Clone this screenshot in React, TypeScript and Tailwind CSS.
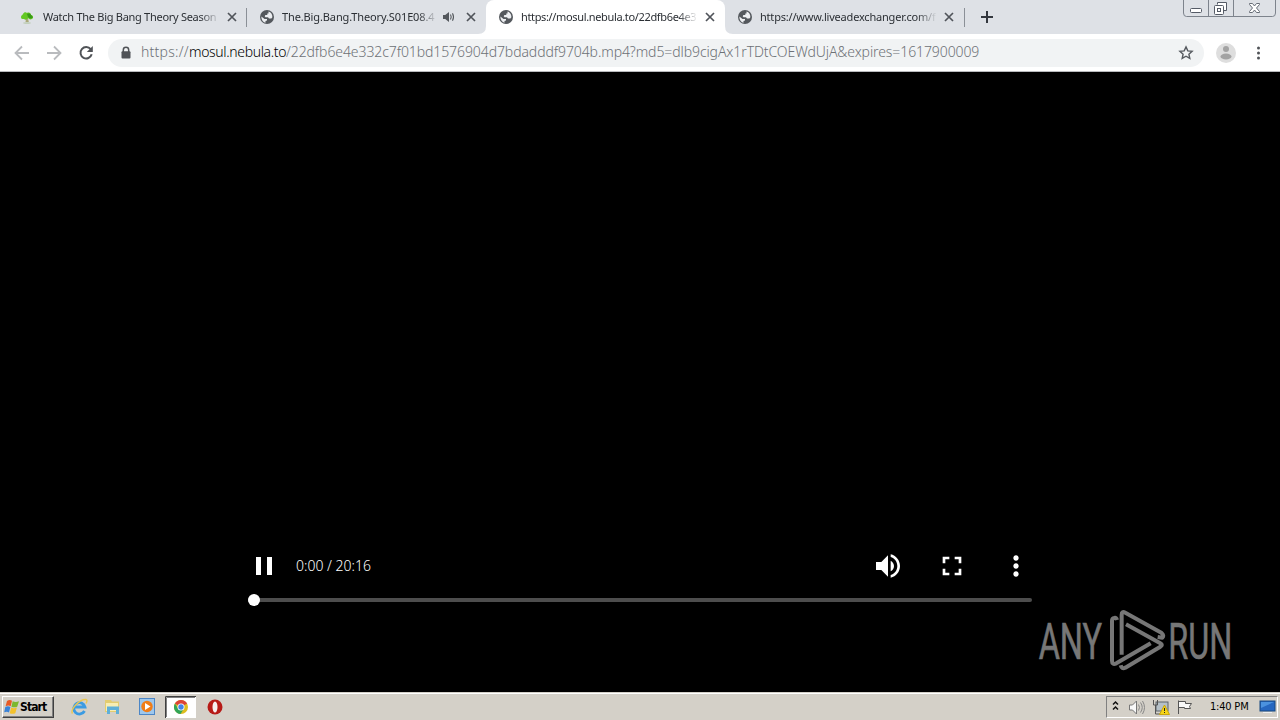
import React from "react";

const Globe = () => (
  <svg className="size-4 shrink-0" viewBox="0 0 16 16">
    <circle cx="8" cy="8" r="7" fill="#54585d" />
    <path d="M2.400 7.500 5.500 10H8v1.400L6.500 12v1.800C4.200 13.200 2.200 10.800 2.400 7.500ZM9.500 2.600c2.500.7 4 2.900 3.900 5.600l-1 1.300H10L9 8.300H6.500L5.700 7.200l.7-1.300h1.900V4.500h1.200Z" fill="#eceef1" />
  </svg>
);

const Close = () => (
  <svg className="size-4 shrink-0" viewBox="0 0 16 16" stroke="#50545a" strokeWidth="1.7">
    <path d="m4 4 8 8M12 4l-8 8" />
  </svg>
);

const Tree = () => (
  <svg className="-ml-px mr-px size-4 shrink-0" viewBox="0 0 16 16">
    <path d="M7.300 8h1.500l1 5H6.500Z" fill="#a9a878" />
    <ellipse cx="8" cy="14" rx="4" ry=".8" fill="#b9c9ad" />
    <path d="M2 8c0-2 2-2 2-3 1-2 3-2 4-1 2-1 4 0 4 2 2 0 3 3 1 4-2 1-3 0-4-1-1 2-3 2-4 1-2 0-3 0-3-2Z" fill="#63c822" />
    <path d="M8 5c2-1 4 0 4 1 2 1 2 3 1 3-2 1-3 0-4-1Z" fill="#3a9a18" />
  </svg>
);

const Speaker = () => (
  <svg className="-ml-0.5 mr-0.5 size-4 shrink-0" viewBox="0 0 16 16">
    <path d="M3 6h2.200L9 3v10L5.200 10H3Z" fill="#54585d" />
    <path d="M10.500 5.500q1.400 2.500 0 5M12.500 4.300q2 3.700 0 7.400" fill="none" stroke="#54585d" strokeWidth="1.100" />
  </svg>
);

type TabProps = { icon: React.ReactNode; title: string; titleClass: string; audio?: boolean; active?: boolean; line?: boolean };

const Tab = ({ icon, title, titleClass, audio, active, line }: TabProps) => (
  <div className={"relative flex h-[34px] w-[239px] shrink-0 items-center pl-3 pr-[7px] " + (active ? "rounded-t-lg bg-white" : "")}>
    {active && (
      <>
        <svg className="absolute bottom-0 -left-2 size-2" viewBox="0 0 8 8"><path d="M8 0v8H0q8 0 8-8" fill="#fff" /></svg>
        <svg className="absolute bottom-0 -right-2 size-2" viewBox="0 0 8 8"><path d="M0 0v8h8Q0 8 0 0" fill="#fff" /></svg>
      </>
    )}
    {icon}
    <div className={"ml-[7px] overflow-hidden whitespace-nowrap text-[11px] leading-4 text-[#2b2f34] [mask-image:linear-gradient(to_right,#000_calc(100%-20px),transparent)] " + (audio ? "w-[156px] " : "w-[177px] ") + titleClass}>
      {title}
    </div>
    {audio && <div className="ml-[4px] flex"><Speaker /></div>}
    <div className="ml-auto flex"><Close /></div>
    {line && <div className="absolute top-2 right-0 h-[19px] w-px bg-[#8b9097]" />}
  </div>
);

const WindowButtons = () => (
  <svg className="absolute top-0 left-[1183px] h-[17px] w-[93px]" viewBox="0 0 93 17" fill="none" stroke="#7d838c">
    <path d="M.5 0v13q0 3.500 3 3.500h86q3 0 3-3.500V0M25.500 0v16M50.500 0v16" />
    <rect x="7.500" y="8.500" width="11" height="4" rx="1" fill="#fff" stroke="#555b66" />
    <path d="M34.500 4.500v-2h9v8h-3" fill="#fff" stroke="#555b66" />
    <rect x="31.500" y="5.500" width="9" height="9" rx="1" fill="#fff" stroke="#555b66" />
    <rect x="34.500" y="8.500" width="3" height="3" stroke="#555b66" />
    <path d="M66.500 3.500h3l2 2.500 2-2.500h3v1l-3 3.500 3 3.500v1h-3l-2-2.500-2 2.500h-3v-1l3-3.500-3-3.500Z" fill="#fff" stroke="#666c76" />
  </svg>
);

const TabStrip = () => (
  <div className="relative flex h-[34px] bg-[#dee1e6] pl-2">
    <Tab icon={<Tree />} title="Watch The Big Bang Theory Season" titleClass="tracking-[-0.28px]" line />
    <Tab icon={<Globe />} title="The.Big.Bang.Theory.S01E08.4" titleClass="tracking-[-0.12px]" audio />
    <Tab icon={<Globe />} title="https://mosul.nebula.to/22dfb6e4e3" titleClass="tracking-[-0.35px]" active />
    <Tab icon={<Globe />} title="https://www.liveadexchanger.com/f" titleClass="tracking-[-0.2px]" />
    <div className="mt-2 h-[19px] w-px bg-[#8b9097]" />
    <svg className="ml-[14px] h-[34px] w-4" viewBox="0 0 16 34" stroke="#33373e" strokeWidth="2"><path d="M2 17h12M8 11v12" /></svg>
    <WindowButtons />
  </div>
);

const Toolbar = () => (
  <div className="flex h-[38px] items-center border-b border-[#b8babd] bg-white pl-[13px]">
    <svg className="h-[18px] w-[82px]" viewBox="0 0 82 18" fill="none" stroke="#b9bbbe" strokeWidth="1.800">
      <path d="M16 9H3M9 2.500 2.500 9 9 15.500M34 9h13M41 2.500 47.500 9 41 15.500" />
      <path d="M77.700 5.200A5.700 5.700 0 1 0 78.700 10.300" stroke="#505357" strokeWidth="2" />
      <path d="M79.800 2v6h-6Z" fill="#505357" stroke="none" />
    </svg>
    <div className="ml-[13px] flex h-7 w-[1096px] items-center rounded-full bg-[#f1f3f4] pl-3 pr-[10px]">
      <svg className="h-4 w-3" viewBox="0 0 12 16"><path d="M3.300 7V5a2.700 2.700 0 0 1 5.400 0v2" fill="none" stroke="#505357" strokeWidth="1.500" /><rect x="1.500" y="6.300" width="9" height="7.200" rx="1" fill="#505357" /></svg>
      <div className="mb-0.5 ml-[9px] flex whitespace-nowrap font-light text-[14px] leading-5 text-[#6d7176]">
        <span className="w-12 tracking-[0.25px]">https://</span>
        <span className="w-[97px] tracking-[-0.35px] text-black">mosul.nebula.to</span>
        <span className="tracking-[-0.09px]">/22dfb6e4e332c7f01bd1576904d7bdadddf9704b.mp4?md5=dlb9cigAx1rTDtCOEWdUjA&amp;expires=1617900009</span>
      </div>
      <svg className="ml-auto size-4" viewBox="0 0 16 16" fill="none" stroke="#55595e" strokeWidth="1.400"><path d="m8 1.900 1.800 4 4.300.4-3.200 2.900.9 4.200L8 11.200l-3.800 2.200.9-4.200-3.200-2.900 4.300-.4Z" /></svg>
    </div>
    <svg className="ml-3 size-5" viewBox="0 0 20 20"><circle cx="10" cy="10" r="10" fill="#dedede" /><circle cx="10" cy="6" r="3" fill="#a3a3a3" /><ellipse cx="10" cy="13.500" rx="5.500" ry="3" fill="#a3a3a3" /></svg>
    <svg className="ml-[14px] size-5" viewBox="0 0 20 20" fill="#505357"><circle cx="8.500" cy="5" r="1.500" /><circle cx="8.500" cy="10" r="1.500" /><circle cx="8.500" cy="15" r="1.500" /></svg>
  </div>
);

const Player = () => (
  <div className="ml-[248px] flex w-[784px] flex-col pt-[478px]">
    <div className="flex h-8 items-center text-white">
      <svg className="size-8" viewBox="0 0 32 32" fill="#fff"><path d="M8 7h5v18H8zM19 7h5v18h-5z" /></svg>
      <span className="ml-4 whitespace-nowrap text-[14px] leading-5 font-light">0:00 / 20:16</span>
      <svg className="ml-auto size-8" viewBox="0 0 24 24" fill="#fff"><path d="M3 9v6h4l5 5V4L7 9H3zm13.500 3c0-1.770-1.020-3.290-2.500-4.030v8.050c1.480-.73 2.500-2.250 2.500-4.020zM14 3.230v2.060c2.890.86 5 3.540 5 6.710s-2.110 5.850-5 6.710v2.060c4.010-.91 7-4.490 7-8.770s-2.990-7.860-7-8.770z" /></svg>
      <svg className="ml-8 size-8" viewBox="0 0 24 24" fill="#fff"><path d="M7 14H5v5h5v-2H7v-3zm-2-4h2V7h3V5H5v5zm12 7h-3v2h5v-5h-2v3zM14 5v2h3v3h2V5h-5z" /></svg>
      <svg className="ml-8 size-8" viewBox="0 0 24 24" fill="#fff"><path d="M12 8c1.100 0 2-.9 2-2s-.9-2-2-2-2 .9-2 2 .9 2 2 2zm0 2c-1.100 0-2 .9-2 2s.9 2 2 2 2-.9 2-2-.9-2-2-2zm0 6c-1.100 0-2 .9-2 2s.9 2 2 2 2-.9 2-2-.9-2-2-2z" /></svg>
    </div>
    <div className="mt-4 flex h-1 items-center rounded-r-xs bg-[#4d4d4d]"><div className="size-3 shrink-0 rounded-full bg-white" /></div>
  </div>
);

const Watermark = () => (
  <svg className="absolute top-[596px] left-[1030px] h-[88px] w-[220px]" viewBox="0 -12 660 264" fill="#777">
    <g stroke="#777" strokeWidth="2" fontFamily="Roboto, sans-serif" fontSize="152">
      <text x="26" y="177" textLength="190" lengthAdjust="spacingAndGlyphs">ANY</text>
      <text x="415" y="177" textLength="192" lengthAdjust="spacingAndGlyphs">RUN</text>
    </g>
    <g fill="none" stroke="#777" strokeWidth="12" strokeLinejoin="round">
      <path d="M275 164V44q0-12 11-6L394 98q9 8 3 15l-14-2" />
      <path d="M288 73 391 130q9 5 0 10L286 203q-11 5-14-7" />
      <path d="M261 60q-2-8-8-6-7 1-7 9V182q0 14 13 8L362 130" />
    </g>
  </svg>
);

const Taskbar = () => (
  <div className="flex h-7 items-center border-t border-[#d4d0c8] bg-[#d4d0c8] shadow-[inset_0_1px_0_#fff]">
    <div className="ml-0.5 mt-px flex h-[22px] w-[52px] items-center border border-t-white border-l-white border-r-[#404040] border-b-[#404040] shadow-[inset_-1px_-1px_0_#808080]">
      <svg className="ml-px size-4 shrink-0" viewBox="0 0 16 16">
        <path d="M3 2Q5.500.3 8 1.700L6.700 7.200Q4.500 5.800 1.600 7.200Z" fill="#e85a25" />
        <path d="M8.700 2.200q2.800 1.500 6.300 0L13.200 7.700q-2.800 1.200-5.800.1Z" fill="#7cb82f" />
        <path d="M1.300 8q2.800-1.300 5.100.1L5 13.500Q3 12 .2 13.300Z" fill="#3a83d8" />
        <path d="M7.200 8.600q2.700 1.200 5.700 0l-1.600 5.600q-2.800 1.200-5.600 0Z" fill="#f3c12c" />
      </svg>
      <span className="font-[DejaVu_Sans_Condensed,DejaVu_Sans,sans-serif] text-[12px] leading-4 font-bold tracking-[-0.9px] text-black">Start</span>
    </div>
    <svg className="ml-4 h-[22px] w-[156px]" viewBox="0 0 156 22">
      <g transform="translate(1 2)">
        <path d="M13.500 13A5.700 5.700 0 1 1 14 9H4" fill="none" stroke="#3b9be2" strokeWidth="2.800" />
        <path d="M1.500 15.500C-1 12 8 1 15 1.500q2 .5 0 4" fill="none" stroke="#eac650" strokeWidth="1.400" />
      </g>
      <g transform="translate(34 1)">
        <path d="M1 3h6l1 1.500h7V15H1Z" fill="#e3cc70" /><path d="M2 6h12v8H2Z" fill="#f7edb4" />
        <path d="M3 17V9.500h12V17h-3v-4H6v4Z" fill="#5fafd8" />
      </g>
      <g transform="translate(69 2)">
        <rect x=".5" y=".5" width="15" height="16" fill="#9dc7ed" stroke="#4c86c6" /><circle cx="8" cy="8.500" r="5.700" fill="#f07d18" /><path d="M6 5v7l5.500-3.500Z" fill="#fff" />
      </g>
      <path d="M95 0h31v22H95Z" fill="#fff" /><path d="M95.500 22V.5H126" fill="none" stroke="#404040" /><path d="M96.500 21V1.500H125" fill="none" stroke="#808080" />
      <g transform="translate(111 11)">
        <circle r="7" fill="#ddbd20" /><path d="M0 0-6.100-3.500A7 7 0 0 1 6.100-3.500Z" fill="#dc4437" /><path d="M-6.100-3.500A7 7 0 0 0-.5 7L3 1.500-3 1.500Z" fill="#31a557" /><circle r="3.500" fill="#fff" /><circle r="2.700" fill="#4285e8" />
      </g>
      <circle cx="145" cy="11" r="7.500" fill="#b71a17" /><ellipse cx="145" cy="11" rx="2.500" ry="5.500" fill="#f6eeee" />
    </svg>
    <div className="mr-0.5 ml-auto mt-px flex h-[22px] w-[172px] items-center border border-t-[#808080] border-l-[#808080] border-r-white border-b-white">
      <svg className="h-5 w-[90px]" viewBox="0 0 90 20" fill="none">
        <path d="m6 8.500 2.500-2.500L11 8.500M6 13.500 8.500 11l2.500 2.500" stroke="#111" strokeWidth="1.500" transform="translate(0 -1)" />
        <path d="M22.500 8h3L29.500 4v13L25.500 13h-3Z" fill="#f8f8f8" stroke="#777" />
        <path d="M31.500 7.500q2 3 0 6M33.500 5.500q3.500 5 0 10M35.500 4q4 6.500 0 13" stroke="#888" />
        <rect x="49" y="5" width="12" height="9" fill="#b5c0c8" stroke="#5c646b" /><path d="M46.500 3v5h4V3M48.500 8v9h5" stroke="#555" />
        <path d="m57.500 8 5 9.500h-10Z" fill="#f7d516" stroke="#c9a60c" /><path d="M57.500 11v3M57.500 15v1" stroke="#222" />
        <path d="M71.500 17V3.500M71.500 4.500h7v2h6l-2 3 1 2h-6v-1h-6" fill="#f8f8f8" stroke="#555" />
      </svg>
      <span className="ml-[13px] whitespace-nowrap font-[DejaVu_Sans_Condensed,DejaVu_Sans,sans-serif] text-[11px] leading-4 tracking-[-0.2px] text-black">1:40 PM</span>
      <svg className="mr-px ml-auto h-4 w-[17px]" viewBox="0 0 17 16"><rect x="1" y="2" width="15" height="10" fill="#2667c0" stroke="#174980" /><path d="M2 3h13L2 9Z" fill="#4b92df" /><path d="M4 13.500h9" stroke="#eee" /></svg>
    </div>
  </div>
);

export default function App() {
  return (
    <div className="relative flex h-[720px] w-[1280px] flex-col overflow-hidden bg-black font-[Noto_Sans,sans-serif]">
      <TabStrip />
      <Toolbar />
      <main className="h-[620px] shrink-0 bg-black"><Player /></main>
      <Taskbar />
      <Watermark />
    </div>
  );
}
